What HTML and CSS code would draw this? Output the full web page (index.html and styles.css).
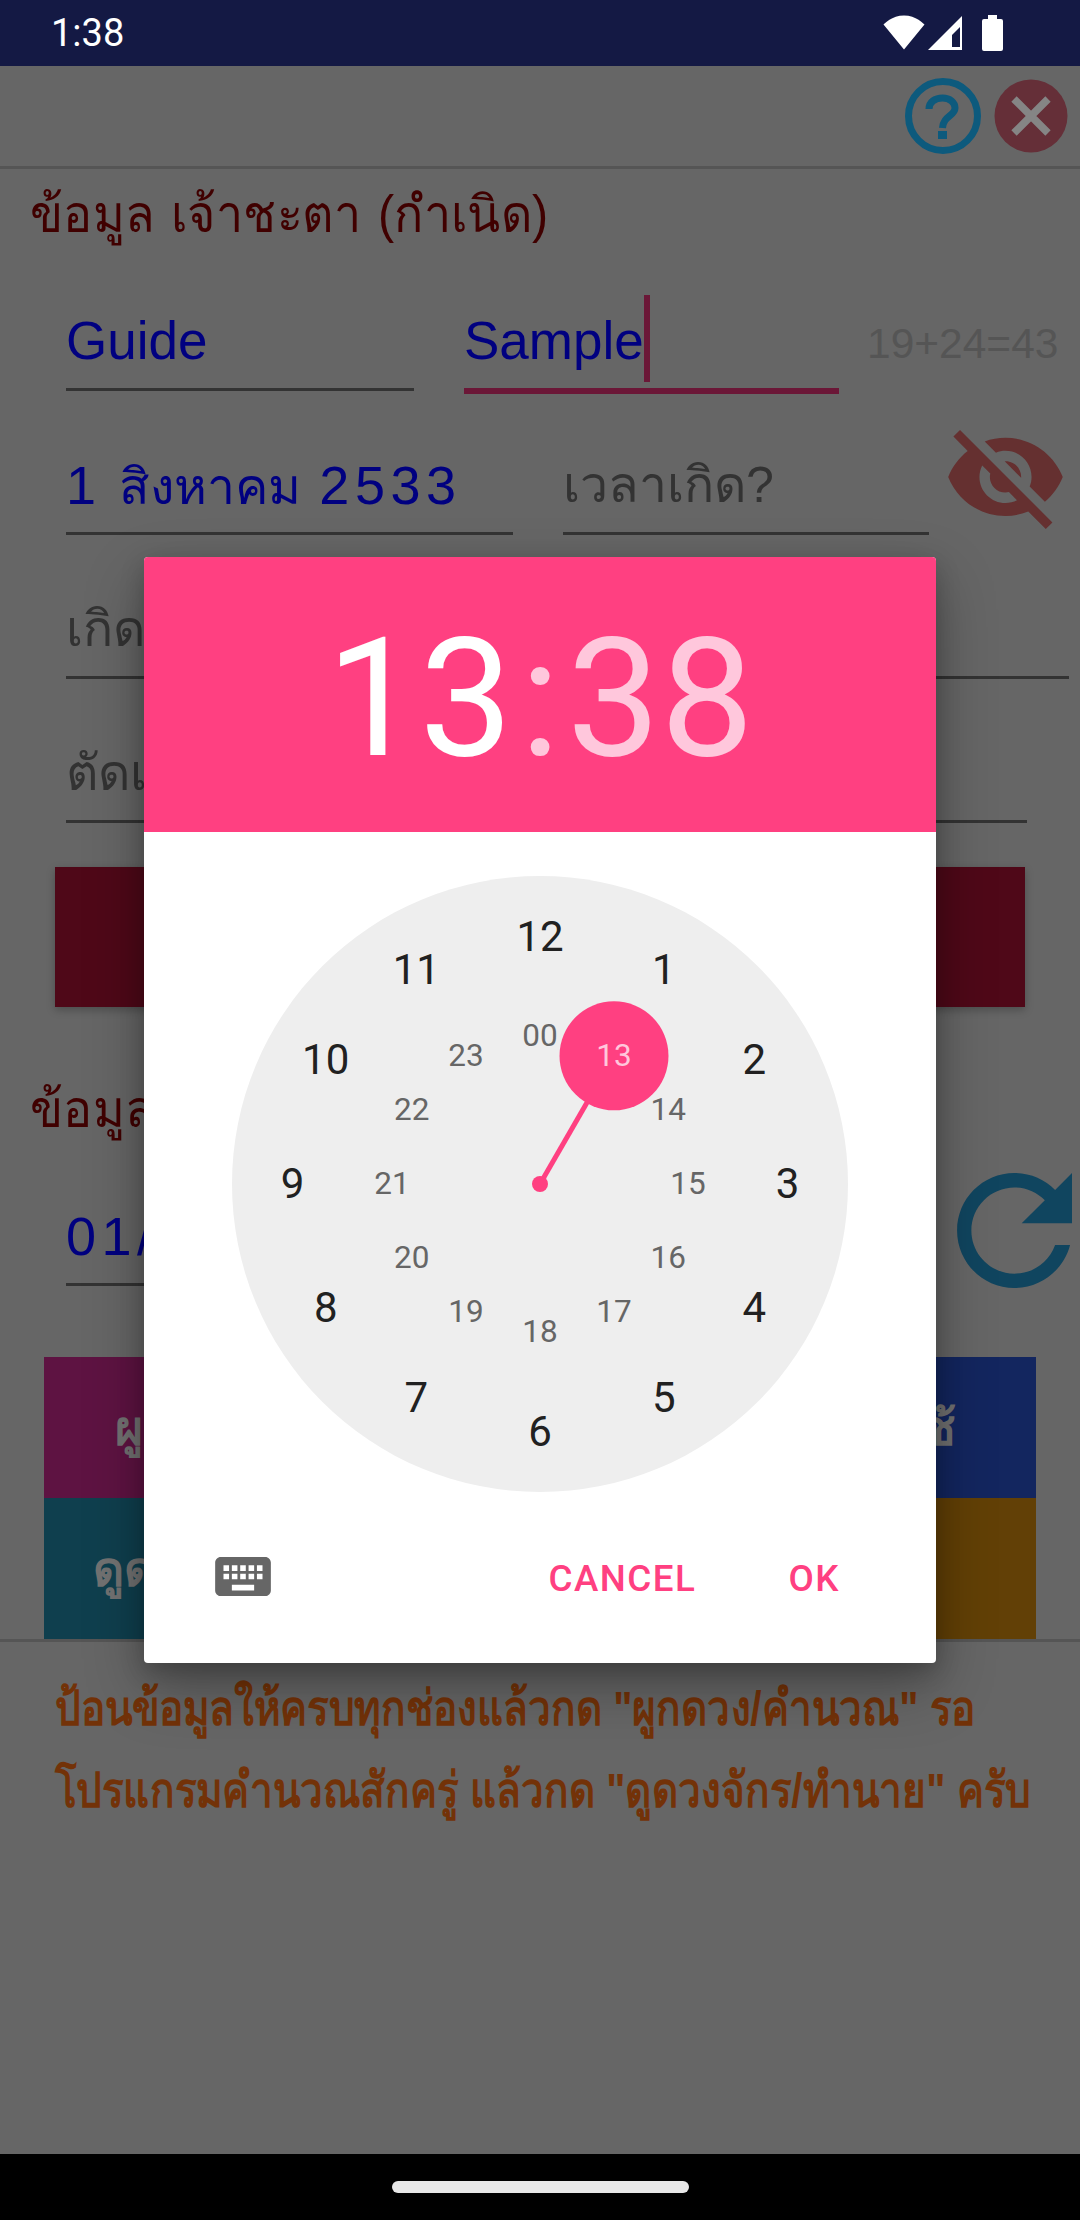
FILE: index.html
```html
<!DOCTYPE html>
<html lang="th">
<head>
<meta charset="utf-8">
<title>Time picker</title>
<link rel="stylesheet" href="styles.css">
</head>
<body>
<div class="screen">
  <header class="status">
    <span class="clock-text">1:38</span>
    <div class="status-icons">
      <svg class="ic-wifi" viewBox="0 0 42 35"><path d="M21 34.5L41.5 9.5C41 9 33 .5 21 .5 9 .5 1 9 .5 9.5Z"/></svg>
      <svg class="ic-signal" viewBox="0 0 34 34"><path fill-rule="evenodd" d="M0 34L34 0V34ZM24 31H32V11L24 19Z"/></svg>
      <svg class="ic-battery" viewBox="0 0 21 36"><path d="M6 0H15V4H19Q21 4 21 6V34Q21 36 19 36H2Q0 36 0 34V6Q0 4 2 4H6Z"/></svg>
    </div>
  </header>

  <div class="toolbar">
    <svg class="ic-help" viewBox="0 0 76 76">
      <circle cx="38" cy="38" r="34.5" class="help-ring"/>
      <path class="help-hook" d="M24 31C24 24 30 20 37.5 20 45 20 50 24.5 50 30 50 38 38 38 37.5 50"/>
      <rect x="33" y="53" width="9" height="8" class="help-dot"/>
    </svg>
    <svg class="ic-close" viewBox="0 0 74 74">
      <circle cx="37" cy="37" r="36.5" class="close-disc"/>
      <path class="close-x" d="M20 20L54 54M54 20L20 54"/>
    </svg>
  </div>

  <main class="form">
    <h1 class="section-title first">ข้อมูล เจ้าชะตา (กำเนิด)</h1>
    <div class="row">
      <div class="field w-guide"><span class="value lat">Guide</span></div>
      <div class="field focused w-sample"><span class="value lat caret">Sample</span></div>
      <span class="counter">19+24=43</span>
    </div>
    <div class="row">
      <div class="field w-date"><span class="value"><span class="digits">1</span> สิงหาคม <span class="digits">2533</span></span></div>
      <div class="field w-time"><span class="hint">เวลาเกิด?</span></div>
      <svg class="ic-eye" viewBox="1 3 22 19"><path d="M12 7c2.76 0 5 2.24 5 5 0 .65-.13 1.26-.36 1.83l2.92 2.92c1.51-1.26 2.7-2.89 3.43-4.75-1.73-4.39-6-7.5-11-7.5-1.4 0-2.74.25-3.98.7l2.16 2.16C10.74 7.13 11.35 7 12 7zM2 4.27l2.28 2.28.46.46C3.08 8.3 1.78 10.02 1 12c1.73 4.39 6 7.5 11 7.5 1.55 0 3.03-.3 4.38-.84l.42.42L19.73 22 21 20.73 3.27 3 2 4.27zM7.53 9.8l1.55 1.55c-.05.21-.08.43-.08.65 0 1.66 1.34 3 3 3 .22 0 .44-.03.65-.08l1.55 1.55c-.67.33-1.41.53-2.2.53-2.76 0-5-2.24-5-5 0-.79.2-1.53.53-2.2zm4.31-.78l3.15 3.15.02-.16c0-1.66-1.34-3-3-3l-.17.01z"/></svg>
    </div>
    <div class="row">
      <div class="field w-place"><span class="hint">เกิด</span></div>
    </div>
    <div class="row">
      <div class="field w-cut"><span class="hint">ตัดเ</span></div>
    </div>
    <div class="primary-bar"></div>

    <h2 class="section-title second">ข้อมูล</h2>
    <div class="row row-date">
      <div class="field w-today"><span class="value digits">01/</span></div>
      <svg class="ic-refresh" viewBox="4 4 16 16"><path d="M17.65 6.35C16.2 4.9 14.21 4 12 4c-4.42 0-7.99 3.58-7.99 8s3.57 8 7.99 8c3.73 0 6.84-2.55 7.73-6h-2.08c-.82 2.33-3.04 4-5.65 4-3.31 0-6-2.69-6-6s2.69-6 6-6c1.66 0 3.14.69 4.22 1.78L13 11h7V4l-2.35 2.35z"/></svg>
    </div>
    <div class="actions">
      <div class="action a-plum"><span class="action-label">ผู</span></div>
      <div class="action a-navy"><span class="action-label">ช้</span></div>
      <div class="action a-teal"><span class="action-label">ดูด</span></div>
      <div class="action a-brown"></div>
    </div>
  </main>

  <section class="note">
    <p>ป้อนข้อมูลให้ครบทุกช่องแล้วกด "ผูกดวง/คำนวณ" รอ</p>
    <p>โปรแกรมคำนวณสักครู่ แล้วกด "ดูดวงจักร/ทำนาย" ครับ</p>
  </section>

  <footer class="navbar"><span class="home-pill"></span></footer>
</div>

<div class="dialog">
  <div class="dialog-head">
    <span class="time-big">13</span><span class="time-sep">:</span><span class="time-big dim">38</span>
  </div>
  <div class="dialog-body">
    <svg class="dial" viewBox="0 0 616 616">
      <circle class="dial-face" cx="308" cy="308" r="308"/>
      <line class="dial-hand" x1="308" y1="308" x2="382" y2="179.8"/>
      <circle class="dial-pin" cx="308" cy="308" r="8"/>
      <circle class="dial-pin" cx="382" cy="179.8" r="54.5"/>
      <g class="outer">
        <text x="308" y="74.5">12</text><text x="431.75" y="107.7">1</text><text x="522.3" y="198.25">2</text>
        <text x="555.5" y="322">3</text><text x="522.3" y="445.75">4</text><text x="431.75" y="536.3">5</text>
        <text x="308" y="569.5">6</text><text x="184.25" y="536.3">7</text><text x="93.7" y="445.75">8</text>
        <text x="60.5" y="322">9</text><text x="93.7" y="198.25">10</text><text x="184.25" y="107.7">11</text>
      </g>
      <g class="inner">
        <text x="308" y="170">00</text><text class="picked" x="382" y="189.8">13</text><text x="436.2" y="244">14</text>
        <text x="456" y="318">15</text><text x="436.2" y="392">16</text><text x="382" y="446.2">17</text>
        <text x="308" y="466">18</text><text x="234" y="446.2">19</text><text x="179.8" y="392">20</text>
        <text x="160" y="318">21</text><text x="179.8" y="244">22</text><text x="234" y="189.8">23</text>
      </g>
    </svg>
    <div class="dialog-foot">
      <svg class="ic-keyboard" viewBox="2 5 20 14"><path d="M20 5H4c-1.1 0-1.99.9-1.99 2L2 17c0 1.1.9 2 2 2h16c1.1 0 2-.9 2-2V7c0-1.1-.9-2-2-2zm-9 3h2v2h-2V8zm0 3h2v2h-2v-2zM8 8h2v2H8V8zm0 3h2v2H8v-2zm-1 2H5v-2h2v2zm0-3H5V8h2v2zm9 7H8v-2h8v2zm0-4h-2v-2h2v2zm0-3h-2V8h2v2zm3 3h-2v-2h2v2zm0-3h-2V8h2v2z"/></svg>
      <span class="btn">CANCEL</span>
      <span class="btn">OK</span>
    </div>
  </div>
</div>
</body>
</html>
```

FILE: styles.css
```css
* { box-sizing: border-box; }
html, body { margin: 0; padding: 0; }
body { width: 1080px; height: 2220px; overflow: hidden; background: #666; font-family: Roboto, "Noto Sans", "DejaVu Sans", sans-serif; }

.screen { width: 1080px; height: 2220px; display: flex; flex-direction: column; background: #666; }

.status { height: 66px; flex: none; background: #141944; display: flex; align-items: center; padding: 0 77px 0 51px; justify-content: space-between; }
.clock-text { color: #fff; font-size: 38px; line-height: 66px; }
.status-icons { display: flex; align-items: flex-start; height: 66px; }
.status-icons svg { fill: #fff; display: block; }
.ic-wifi { width: 42px; height: 35px; margin-top: 15px; }
.ic-signal { width: 34px; height: 34px; margin: 16px 0 0 3px; }
.ic-battery { width: 21px; height: 36px; margin: 15px 0 0 20px; }

.toolbar { height: 103px; flex: none; border-bottom: 3px solid #555; display: flex; align-items: flex-start; padding: 12px 12px 0 0; justify-content: flex-end; gap: 13px; }
.ic-help { width: 76px; height: 76px; }
.help-ring { fill: none; stroke: #0d5a7d; stroke-width: 7; }
.help-hook { fill: none; stroke: #0d5a7d; stroke-width: 7; }
.help-dot { fill: #0d5a7d; }
.ic-close { width: 74px; height: 74px; margin-top: 1px; }
.close-disc { fill: #652f38; }
.close-x { fill: none; stroke: #858585; stroke-width: 7.5; }

.form { flex: none; display: flex; flex-direction: column; font-family: "Liberation Sans", "Noto Sans", sans-serif; }
.section-title { margin: 0; font-size: 51px; font-weight: 400; color: #400000; padding-left: 30px; white-space: nowrap; word-spacing: 3.5px; transform: scaleX(.95); transform-origin: 30px center; }
.section-title.first { height: 78px; line-height: 78px; padding-top: 7px; }
.section-title.second { height: 122px; line-height: 78px; padding-top: 64px; }

.row { height: 144px; display: flex; align-items: flex-end; padding-left: 66px; position: relative; }
.row-date { height: 157px; }
.field { border-bottom: 3px solid #333; height: 80px; font-size: 50px; line-height: 60px; flex: none; word-spacing: 4px; }
.field.focused { height: 83px; border-bottom: 6px solid #6b1737; margin-bottom: -3px; }
.w-guide { width: 348px; margin-right: 50px; }
.w-sample { width: 375px; margin-right: 28px; }
.w-date { width: 447px; margin-right: 50px; }
.w-time { width: 366px; }
.w-place { width: 1003px; }
.w-cut { width: 961px; }
.w-today { width: 400px; }
.value { color: #000080; }
.lat { font-size: 53px; }
.digits { font-size: 54px; letter-spacing: 5.5px; }
.hint { color: #333; }
.caret { position: relative; }
.caret::after { content: ""; position: absolute; left: 100%; top: -16px; width: 6px; height: 87px; background: #6b1737; }
.counter { color: #555; font-size: 42.5px; line-height: 60px; margin-bottom: 17px; white-space: nowrap; }

.ic-eye { width: 115px; height: 99px; fill: #653030; margin: 0 0 6px 19px; flex: none; }
.ic-refresh { position: absolute; left: 957px; top: 44px; width: 115px; height: 115px; fill: #10455f; }

.primary-bar { height: 140px; margin: 44px 55px 0; background: #4f0818; box-shadow: 0 3px 8px rgba(0,0,0,.25); }

.actions { margin: 71px 44px 0; display: grid; grid-template-columns: 1fr 1fr; grid-auto-rows: 141px; }
.action { display: flex; align-items: center; font-size: 48px; font-weight: 700; }
.action-label { color: #727272; }
.a-plum { background: #5e1342; padding-left: 71px; }
.a-navy { background: #13265f; justify-content: flex-end; padding-right: 80px; }
.a-teal { background: #0f3f4e; padding-left: 49px; }
.a-brown { background: #624006; }

.note { flex: 1; border-top: 3px solid #555; padding: 25px 0 0 55px; color: #733208; font-family: "Liberation Sans", "Noto Sans", sans-serif; font-size: 49px; font-weight: 600; line-height: 82px; }
.note p { margin: 0; white-space: nowrap; transform: scaleX(.825); transform-origin: left center; }

.navbar { height: 66px; flex: none; background: #000; display: flex; justify-content: center; padding-top: 27px; }
.home-pill { width: 297px; height: 12px; border-radius: 6px; background: #e8e8e8; }

.dialog { position: absolute; left: 144px; top: 557px; width: 792px; height: 1106px; border-radius: 4px; overflow: hidden; background: #fff; display: flex; flex-direction: column; box-shadow: 0 24px 60px rgba(0,0,0,.3), 0 8px 24px rgba(0,0,0,.2); }
.dialog-head { height: 275px; flex: none; background: #ff4081; display: flex; align-items: center; justify-content: center; color: #fff; font-size: 166px; line-height: 275px; padding-top: 8px; }
.time-sep { margin: 0 7px; color: #ffc7dc; }
.dim { color: #ffc7dc; }
.dialog-body { flex: 1; display: flex; flex-direction: column; align-items: center; padding-top: 44px; }
.dial { width: 616px; height: 616px; display: block; flex: none; }
.dial-face { fill: #eee; }
.dial-hand { stroke: #ff4081; stroke-width: 5; }
.dial-pin { fill: #ff4081; }
.dial text { text-anchor: middle; font-family: Roboto, sans-serif; }
.outer text { font-size: 42px; fill: #212121; }
.inner text { font-size: 31.5px; fill: #666; }
.inner text.picked { fill: #ffc7dc; }
.dialog-foot { align-self: stretch; flex: 1; display: flex; align-items: center; padding: 2px 96px 0 71px; gap: 92px; }
.ic-keyboard { width: 56px; height: 39px; fill: #666; margin-right: auto; flex: none; margin-top: -4px; }
.btn { color: #ff4081; font-size: 36.75px; font-weight: 500; line-height: 44px; letter-spacing: 1.5px; }
```
